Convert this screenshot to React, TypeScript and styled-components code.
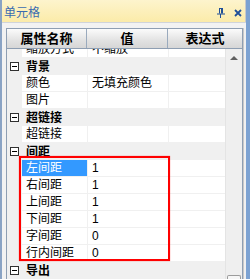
import styled, { createGlobalStyle } from 'styled-components';

type GridRow =
  | { kind: 'cat'; label: string }
  | { kind: 'prop'; label: string; value?: string; selected?: boolean };

const ROWS: GridRow[] = [
  { kind: 'prop', label: '缩放方式', value: '不缩放' },
  { kind: 'cat', label: '背景' },
  { kind: 'prop', label: '颜色', value: '无填充颜色' },
  { kind: 'prop', label: '图片' },
  { kind: 'cat', label: '超链接' },
  { kind: 'prop', label: '超链接' },
  { kind: 'cat', label: '间距' },
  { kind: 'prop', label: '左间距', value: '1', selected: true },
  { kind: 'prop', label: '右间距', value: '1' },
  { kind: 'prop', label: '上间距', value: '1' },
  { kind: 'prop', label: '下间距', value: '1' },
  { kind: 'prop', label: '字间距', value: '0' },
  { kind: 'prop', label: '行内间距', value: '0' },
  { kind: 'cat', label: '导出' },
];

const GlobalStyle = createGlobalStyle`
  html, body {
    margin: 0;
    padding: 0;
    background: #ffffff;
  }
  body {
    font-family: "Liberation Sans", "Noto Sans CJK SC", sans-serif;
  }
`;

const PinIcon = () => (
  <svg width="8" height="10" viewBox="0 0 8 10">
    <path d="M2 0.5h4M2.5 0.5v5M5.5 0.5v5M4.5 0.5v5M0 6h8M3.5 6v4" stroke="#1f4f98" strokeWidth="1" fill="none" />
  </svg>
);

const CloseIcon = () => (
  <svg width="8" height="8" viewBox="0 0 8 8">
    <path d="M1 1L7 7M7 1L1 7" stroke="#1f4f98" strokeWidth="1.8" />
  </svg>
);

const Expander = () => (
  <ExpanderBox>
    <ExpanderDash />
  </ExpanderBox>
);

const App = () => {
  return (
    <>
      <GlobalStyle />
      <Window>
        <TitleBar>
          <Title>单元格</Title>
          <TitleIcons>
            <PinIcon />
            <CloseIcon />
          </TitleIcons>
        </TitleBar>

        <Body>
          <Panel>
            <Header>
              <HeaderCell $width={80}>属性名称</HeaderCell>
              <HeaderCell $width={81}>值</HeaderCell>
              <HeaderCell $width={74} $last>表达式</HeaderCell>
            </Header>

            <ContentRow>
              <Grid>
                <Rows>
                  {ROWS.map((row, i) =>
                    row.kind === 'cat' ? (
                      <CatRow key={i}>
                        <Gutter>
                          <Expander />
                        </Gutter>
                        <CatLabel>{row.label}</CatLabel>
                      </CatRow>
                    ) : (
                      <PropRow key={i}>
                        <Gutter />
                        <NameCell $selected={row.selected}>{row.label}</NameCell>
                        <ValueCell>{row.value}</ValueCell>
                        <ExprCell />
                      </PropRow>
                    )
                  )}
                </Rows>
              </Grid>

              <ScrollBar>
                <ArrowButton>
                  <UpArrow />
                </ArrowButton>
                <Thumb />
              </ScrollBar>
            </ContentRow>
          </Panel>
          <RightGap />
        </Body>

        <Highlight />
      </Window>
    </>
  );
};

const Window = styled.div`
  position: relative;
  width: 250px;
  height: 279px;
  box-sizing: border-box;
  border-left: 2px solid #8aa3c4;
  border-right: 4px solid #7ca2d2;
  background: #f2f2f2;
  display: flex;
  flex-direction: column;
  overflow: hidden;
`;

const TitleBar = styled.div`
  height: 22px;
  flex: none;
  display: flex;
  align-items: center;
  justify-content: space-between;
  padding: 0 3px 0 2px;
  background: linear-gradient(#fdf4cd, #fbeba9);
  border-right: 1px solid #c9c9c9;
`;

const Title = styled.span`
  color: #3a6bb0;
  font-size: 12px;
  line-height: 16px;
  padding-top: 3px;
`;

const TitleIcons = styled.div`
  display: flex;
  align-items: center;
  gap: 9px;
  padding-top: 3px;
`;

const Body = styled.div`
  flex: 1;
  min-height: 0;
  display: flex;
  padding: 5px 0 0 4px;
  border-top: 1px solid #d0d4da;
`;

const Panel = styled.div`
  width: 237px;
  display: flex;
  flex-direction: column;
  box-sizing: border-box;
  border: 1px solid #8e9eb2;
  border-bottom: none;
  background: #f0f0f0;
`;

const RightGap = styled.div`
  flex: 1;
  border-left: 1px solid #c8c8c8;
  background: #f0f0f0;
`;

const Header = styled.div`
  height: 20px;
  flex: none;
  display: flex;
  border-bottom: 1px solid #8e9eb2;
  box-sizing: border-box;
`;

const HeaderCell = styled.div<{ $width: number; $last?: boolean }>`
  width: ${(p) => p.$width}px;
  box-sizing: border-box;
  display: flex;
  align-items: center;
  justify-content: center;
  background: linear-gradient(#fbfbfb, #e2e2e2 60%, #d6d6d6);
  border-right: ${(p) => (p.$last ? 'none' : '1px solid #9aaabd')};
  font-size: 13px;
  font-weight: 700;
  color: #000000;
  line-height: 18px;
`;

const ContentRow = styled.div`
  flex: 1;
  min-height: 0;
  display: flex;
`;

const Grid = styled.div`
  width: 218px;
  overflow: hidden;
  background: #f0f0f0;
`;

const Rows = styled.div`
  margin-top: -8px;
  display: flex;
  flex-direction: column;
`;

const CatRow = styled.div`
  height: 17px;
  display: flex;
  align-items: center;
  background: #f0f0f0;
`;

const PropRow = styled.div`
  height: 17px;
  box-sizing: border-box;
  display: flex;
  border-bottom: 1px solid #f0f0f0;
`;

const Gutter = styled.div`
  width: 15px;
  height: 100%;
  flex: none;
  display: flex;
  align-items: center;
  padding-left: 3px;
  box-sizing: border-box;
  background: #f0f0f0;
`;

const ExpanderBox = styled.div`
  width: 9px;
  height: 9px;
  box-sizing: border-box;
  border: 1px solid #303030;
  background: #ffffff;
  display: flex;
  align-items: center;
  justify-content: center;
`;

const ExpanderDash = styled.div`
  width: 5px;
  height: 1px;
  background: #000000;
`;

const CatLabel = styled.span`
  padding-left: 4px;
  font-size: 12px;
  font-weight: 700;
  line-height: 16px;
  color: #000000;
`;

const CellBase = styled.div`
  height: 16px;
  box-sizing: border-box;
  font-size: 12px;
  line-height: 16px;
  white-space: nowrap;
  overflow: hidden;
  background: #ffffff;
  color: #000000;
`;

const NameCell = styled(CellBase)<{ $selected?: boolean }>`
  width: 66px;
  padding-left: 4px;
  border-right: 1px solid #f0f0f0;
  background: ${(p) => (p.$selected ? '#3399ff' : '#ffffff')};
  color: ${(p) => (p.$selected ? '#ffffff' : '#000000')};
`;

const ValueCell = styled(CellBase)`
  width: 81px;
  padding-left: 4px;
  border-right: 1px solid #f0f0f0;
`;

const ExprCell = styled(CellBase)`
  flex: 1;
`;

const ScrollBar = styled.div`
  flex: 1;
  display: flex;
  flex-direction: column;
  background: #efefef;
  border-left: 1px solid #e4e4e4;
`;

const ArrowButton = styled.div`
  height: 17px;
  display: flex;
  align-items: center;
  justify-content: center;
`;

const UpArrow = styled.div`
  width: 0;
  height: 0;
  border-left: 4px solid transparent;
  border-right: 4px solid transparent;
  border-bottom: 4px solid #606060;
`;

const Thumb = styled.div`
  margin-top: auto;
  margin-left: 1px;
  width: 14px;
  height: 4px;
  box-sizing: border-box;
  border: 1px solid #9c9c9c;
  border-bottom: none;
  border-radius: 2px 2px 0 0;
  background: #f6f6f6;
`;

const Highlight = styled.div`
  position: absolute;
  left: 17px;
  top: 156px;
  width: 151px;
  height: 105px;
  box-sizing: border-box;
  border: 2px solid #ff0000;
  box-shadow: 0 0 1px rgba(255, 0, 0, 0.6);
  pointer-events: none;
`;

export default App;
